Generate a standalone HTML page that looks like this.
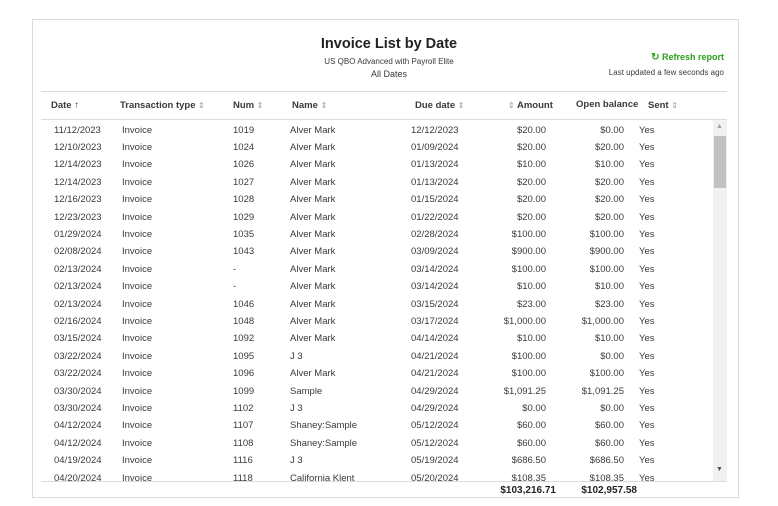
<!DOCTYPE html><html><head><style>
body{margin:0;width:778px;height:506px;background:#fff;font-family:"Liberation Sans",sans-serif;color:#393a3d;position:relative;overflow:hidden}
.card{position:absolute;left:32px;top:19px;width:707px;height:479px;border:1px solid #dcdcdc;box-sizing:border-box}
.a{position:absolute;white-space:nowrap}
.h{font-size:9.5px;font-weight:bold;color:#393a3d}
.r{font-size:9.5px;color:#393a3d}
.s{color:#999;font-size:8px;font-weight:normal}
.rt{text-align:right}
</style></head><body>
<div class="card"></div>
<div class="a" style="left:0;width:778px;top:36px;text-align:center;font-size:14.5px;font-weight:bold;color:#222">Invoice List by Date</div>
<div class="a" style="left:0;width:778px;top:57px;text-align:center;font-size:8px">US QBO Advanced with Payroll Elite</div>
<div class="a" style="left:0;width:778px;top:69px;text-align:center;font-size:9px">All Dates</div>
<div class="a" style="right:54px;top:52px;font-size:9px;color:#2ca01c;font-weight:bold"><span style="font-size:10px">&#x21bb;</span> Refresh report</div>
<div class="a" style="right:54px;top:68px;font-size:8px">Last updated a few seconds ago</div>
<div class="a" style="left:41px;top:91px;width:686px;height:1px;background:#dcdcdc"></div>
<div class="a" style="left:41px;top:119px;width:686px;height:1px;background:#dcdcdc"></div>
<div class="a h" style="left:51px;top:100px">Date &#x2191;</div>
<div class="a h" style="left:120px;top:100px">Transaction type <span class="s">&#x21d5;</span></div>
<div class="a h" style="left:233px;top:100px">Num <span class="s">&#x21d5;</span></div>
<div class="a h" style="left:292px;top:100px">Name <span class="s">&#x21d5;</span></div>
<div class="a h" style="left:415px;top:100px">Due date <span class="s">&#x21d5;</span></div>
<div class="a h" style="left:508px;top:100px"><span class="s">&#x21d5;</span> Amount</div>
<div class="a h" style="left:576px;top:99px">Open balance</div>
<div class="a h" style="left:648px;top:100px">Sent <span class="s">&#x21d5;</span></div>
<div class="a" style="left:41px;top:120px;width:672px;height:361px;overflow:hidden" id="b"></div>
<div class="a" style="left:713px;top:120px;width:14px;height:361px;background:#f1f1f1"></div>
<div class="a" style="left:714px;top:136px;width:12px;height:52px;background:#c1c1c1"></div>
<div class="a" style="left:716px;top:123px;font-size:7px;color:#a0a0a0">&#x25b2;</div>
<div class="a" style="left:716px;top:466px;font-size:7px;color:#505050">&#x25bc;</div>
<div class="a" style="left:41px;top:481px;width:686px;height:1px;background:#dcdcdc"></div>
<div class="a rt" style="right:222px;top:485px;font-size:10px;font-weight:bold;color:#222">$103,216.71</div>
<div class="a rt" style="right:141px;top:485px;font-size:10px;font-weight:bold;color:#222">$102,957.58</div>
<script>
var d=[["11/12/2023","1019","Alver Mark","12/12/2023","$20.00","$0.00"],["12/10/2023","1024","Alver Mark","01/09/2024","$20.00","$20.00"],["12/14/2023","1026","Alver Mark","01/13/2024","$10.00","$10.00"],["12/14/2023","1027","Alver Mark","01/13/2024","$20.00","$20.00"],["12/16/2023","1028","Alver Mark","01/15/2024","$20.00","$20.00"],["12/23/2023","1029","Alver Mark","01/22/2024","$20.00","$20.00"],["01/29/2024","1035","Alver Mark","02/28/2024","$100.00","$100.00"],["02/08/2024","1043","Alver Mark","03/09/2024","$900.00","$900.00"],["02/13/2024","-","Alver Mark","03/14/2024","$100.00","$100.00"],["02/13/2024","-","Alver Mark","03/14/2024","$10.00","$10.00"],["02/13/2024","1046","Alver Mark","03/15/2024","$23.00","$23.00"],["02/16/2024","1048","Alver Mark","03/17/2024","$1,000.00","$1,000.00"],["03/15/2024","1092","Alver Mark","04/14/2024","$10.00","$10.00"],["03/22/2024","1095","J 3","04/21/2024","$100.00","$0.00"],["03/22/2024","1096","Alver Mark","04/21/2024","$100.00","$100.00"],["03/30/2024","1099","Sample","04/29/2024","$1,091.25","$1,091.25"],["03/30/2024","1102","J 3","04/29/2024","$0.00","$0.00"],["04/12/2024","1107","Shaney:Sample","05/12/2024","$60.00","$60.00"],["04/12/2024","1108","Shaney:Sample","05/12/2024","$60.00","$60.00"],["04/19/2024","1116","J 3","05/19/2024","$686.50","$686.50"],["04/20/2024","1118","California Klent","05/20/2024","$108.35","$108.35"]];
var h="";d.forEach(function(r,i){var t=4.5+i*17.4;
h+='<div class="a r" style="left:13px;top:'+t+'px">'+r[0]+'</div><div class="a r" style="left:81px;top:'+t+'px">Invoice</div><div class="a r" style="left:192px;top:'+t+'px">'+r[1]+'</div><div class="a r" style="left:249px;top:'+t+'px">'+r[2]+'</div><div class="a r" style="left:370px;top:'+t+'px">'+r[3]+'</div><div class="a r rt" style="right:167px;top:'+t+'px">'+r[4]+'</div><div class="a r rt" style="right:89px;top:'+t+'px">'+r[5]+'</div><div class="a r" style="left:598px;top:'+t+'px">Yes</div>';});
document.getElementById("b").innerHTML=h;
</script>
</body></html>
